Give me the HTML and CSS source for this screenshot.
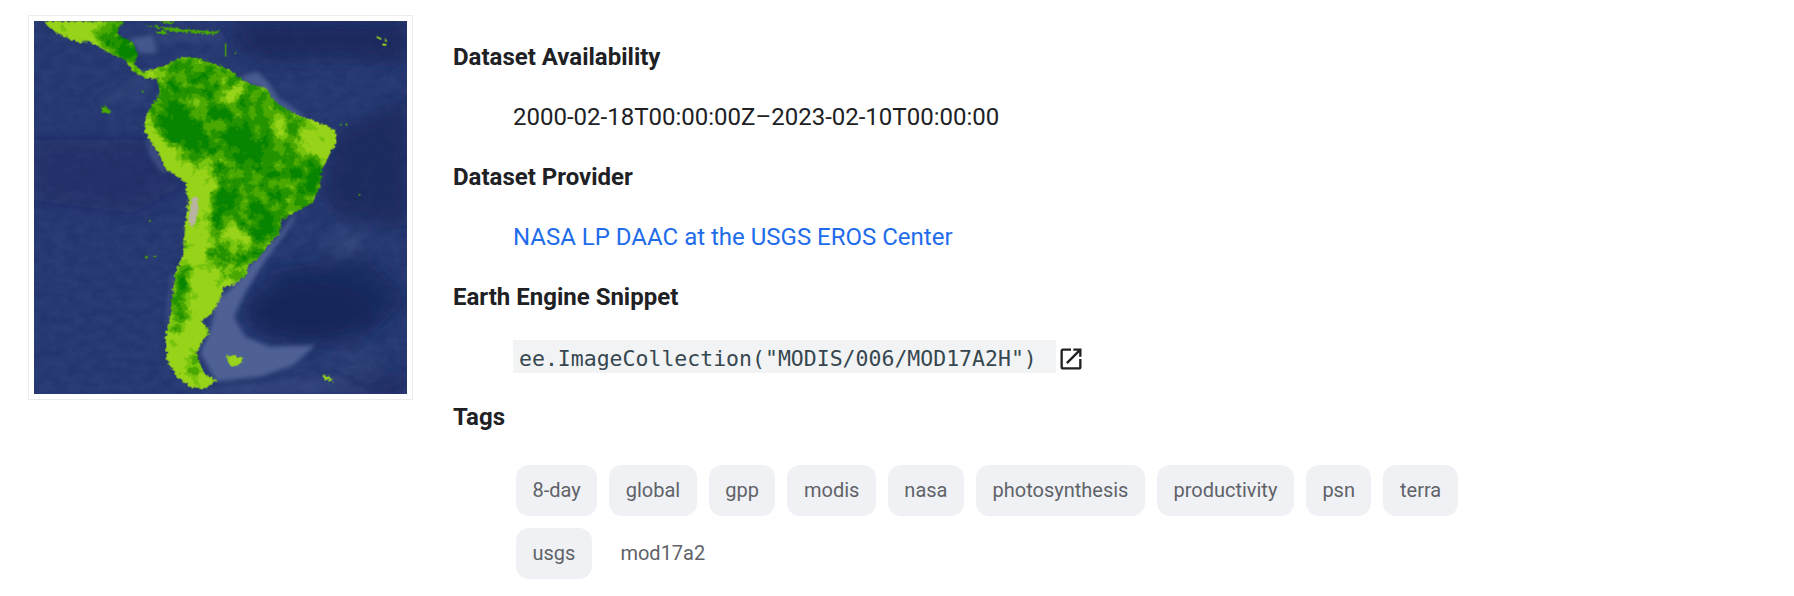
FILE: index.html
```
<!DOCTYPE html>
<html lang="en">
<head>
<meta charset="utf-8">
<title>MOD17A2H</title>
<link rel="stylesheet" href="styles.css">
</head>
<body>
<main class="page">
  <figure class="thumb">
    <svg class="map" viewBox="102 63 1119 1119" role="img" aria-label="Map of gross primary productivity over South America">
      <defs>
        <filter id="rough" x="-5%" y="-5%" width="110%" height="110%" color-interpolation-filters="sRGB">
          <feTurbulence type="fractalNoise" baseFrequency="0.11" numOctaves="2" seed="4"/>
          <feDisplacementMap in="SourceGraphic" scale="16" xChannelSelector="R" yChannelSelector="G"/>
        </filter>
        <filter id="field" x="0" y="0" width="100%" height="100%" color-interpolation-filters="sRGB">
          <feGaussianBlur in="SourceGraphic" stdDeviation="16" result="blurred"/>
          <feTurbulence type="fractalNoise" baseFrequency="0.028" numOctaves="4" seed="23"/>
          <feColorMatrix values="1 0 0 0 0  1 0 0 0 0  1 0 0 0 0  0 0 0 0 1" result="noise"/>
          <feComposite in="blurred" in2="noise" operator="arithmetic" k1="0" k2="1" k3="0.95" k4="-0.47"/>
          <feComponentTransfer>
            <feFuncR type="discrete" tableValues=".59 .47 .29 .14 .03"/>
            <feFuncG type="discrete" tableValues=".83 .77 .66 .58 .52"/>
            <feFuncB type="discrete" tableValues=".10 .06 .01 0 0"/>
          </feComponentTransfer>
        </filter>
        <filter id="grain" x="0" y="0" width="100%" height="100%" color-interpolation-filters="sRGB">
          <feTurbulence type="fractalNoise" baseFrequency="0.025 0.04" numOctaves="5" seed="9"/>
          <feColorMatrix values="0 0 0 0 .09  0 0 0 0 .15  0 0 0 0 .36  1.6 0 0 0 -.55"/>
        </filter>
        <filter id="soft"><feGaussianBlur stdDeviation="26"/></filter>
        <filter id="soft2"><feGaussianBlur stdDeviation="6"/></filter>
        <clipPath id="land"><path d="M130 63L370 63L350 100L400 130L415 165L400 190L430 215L470 205L505 190L545 170L590 175L640 190L690 210L720 235L760 255L800 265L825 305L880 340L920 355L1005 388L1010 425L985 470L965 510L960 560L935 610L880 640L845 660L840 700L800 740L780 770L745 795L740 825L700 855L670 860L665 885L655 905L640 935L605 965L630 995L610 1020L590 1055L600 1090L615 1125L650 1140L610 1170L570 1160L530 1130L500 1080L497 1010L510 950L525 820L550 760L555 680L565 600L555 545L500 510L470 450L432 395L440 340L480 280L470 235L440 235L400 215L375 180L330 160L270 125L235 128L190 110L150 85Z"/></clipPath>
      </defs>
      <rect class="sea" x="102" y="63" width="1119" height="1119"/>
      <g filter="url(#soft)">
        <path class="deep" d="M720 63L1221 63L1221 190L1000 170L780 180L700 120Z" opacity=".8"/>
        <path class="deep" d="M1010 400L1221 300L1221 680L1000 640L970 560Z" opacity=".75"/>
        <ellipse class="deep" cx="930" cy="935" rx="190" ry="90"/>
        <path class="deep" d="M780 810L1100 770L1221 900L1100 1010L900 900Z" opacity=".65"/>
        <path class="deep" d="M102 420L520 420L540 560L400 640L102 600Z" opacity=".3"/>
        <path class="deep" d="M1000 1150L1221 1110L1221 1182L1000 1182Z" opacity=".5"/>
        <path class="pale" d="M975 725L1075 700L1080 750L1000 745Z" opacity=".7"/>
        <path class="pale" d="M1010 1080L1130 1060L1130 1130L1000 1120Z" opacity=".3"/>
      </g>
      <rect class="noise" x="102" y="63" width="1119" height="1119" filter="url(#grain)" opacity=".4"/>
      <g filter="url(#soft2)">
        <path class="shelf" d="M650 900L700 860L745 800L840 700L885 640L880 665L790 790L735 880L702 950L735 1010L810 1040L945 1035L880 1095L780 1130L650 1145L600 1060L630 990Z"/>
        <path class="shelf" d="M720 230L770 215L800 240L840 300L920 350L880 345L820 310L790 270L730 245Z" opacity=".85"/>
        <path class="shelf" d="M385 115L460 105L470 160L420 160Z" opacity=".75"/>
        <path class="shelf" d="M470 100L660 95L680 125L570 125L470 130Z" opacity=".25"/>
        <path class="shelf" d="M435 400L470 450L500 510L490 525L450 470Z" opacity=".55"/>
        <path class="shelf" d="M500 1000L525 820L512 830L495 960Z" opacity=".5"/>
        <path class="shelf" d="M620 1165L1000 1125L1100 1170L1100 1182L610 1182Z" opacity=".25"/>
        <path class="shelf" d="M290 300L420 225L470 240L430 300L310 315Z" opacity=".16"/>
      </g>
      <g filter="url(#rough)">
        <g clip-path="url(#land)">
          <g filter="url(#field)">
            <rect class="f-low" x="102" y="63" width="1119" height="1119"/>
            <path class="f-mid" d="M265 90L380 40L440 150L460 240L380 190L300 140Z"/>
            <path class="f-mid" d="M470 230L550 150L720 215L830 280L930 350L880 440L970 470L985 560L920 640L860 660L850 700L790 780L750 800L735 840L680 830L620 770L630 690L625 640L650 560L640 515L570 480L500 430L440 350Z"/>
            <path class="f-mid" d="M530 830L570 770L565 900L535 1010L505 1000Z"/>
            <path class="f-low" d="M670 250L730 265L730 300L670 300Z"/>
            <path class="f-low" d="M570 320L610 320L610 350L570 350Z"/>
            <path class="f-low" d="M930 370L1020 390L1000 450L950 480L915 430Z"/>
            <path class="f-low" d="M670 680L745 690L770 720L740 745L690 740L650 710Z"/>
            <path class="f-low" d="M810 350L860 360L860 400L810 390Z"/>
            <path class="f-high" d="M475 340L545 290L590 360L630 440L570 460L500 410Z"/>
            <path class="f-high" d="M625 310L680 320L680 370L625 370Z"/>
            <path class="f-high" d="M700 370L790 410L790 490L710 480L680 420Z"/>
            <path class="f-high" d="M895 500L965 510L955 590L905 570Z"/>
            <path class="f-high" d="M730 640L840 650L800 720L770 740L750 690Z"/>
            <path class="f-high" d="M650 565L710 565L700 610L640 640Z"/>
            <path class="f-high" d="M340 110L410 140L400 180L340 150Z"/>
            <path class="f-high" d="M530 810L562 790L555 910L525 940Z"/>
            <path class="f-high" d="M625 610L648 590L640 680L622 695Z"/>
            <path class="f-mid" d="M545 1075L590 1060L600 1120L560 1120Z"/>
          </g>
        </g>
      </g>
      <path class="grey" d="M575 595L590 590L598 620L590 650L580 680L565 670L570 630Z" filter="url(#rough)"/>
      <g filter="url(#rough)">
        <path class="mid" d="M305 320L318 318L336 338L305 340Z"/>
        <path class="lime" d="M678 1065L730 1072L718 1098L690 1098Z"/>
        <path class="lime" d="M965 1122L1000 1135L998 1146L975 1138Z"/>
        <path class="mid" d="M430 75L460 78L640 95L660 92L645 102L540 98L500 90Z"/>
        <path class="mid" d="M468 63L525 63L510 72Z"/>
        <path class="mid" d="M468 92L500 92L498 102L468 100Z"/>
      </g>
      <path class="lime" d="M1130 108L1145 115L1143 120L1130 114ZM1155 112L1162 125L1155 125ZM1147 130L1160 132L1158 138L1147 136Z"/>
      <path class="mid" d="M1020 372h5v5h-5zM1037 370h5v7h-5zM1076 582h5v5h-5zM447 660h5v5h-5zM435 768h8v7h-8zM460 767h9v4h-9zM675 130h4v40h-4zM425 272h6v5h-6zM704 157h5v5h-5z"/>
    </svg>
  </figure>
  <dl class="facts">
    <dt class="term">Dataset Availability</dt>
    <dd class="value">2000-02-18T00:00:00Z–2023-02-10T00:00:00</dd>
    <dt class="term">Dataset Provider</dt>
    <dd class="value"><a class="link" href="#">NASA LP DAAC at the USGS EROS Center</a></dd>
    <dt class="term">Earth Engine Snippet</dt>
    <dd class="value snippet">
      <code class="code">ee.ImageCollection("MODIS/006/MOD17A2H") </code>
      <a class="open" href="#" aria-label="Open in code editor">
        <svg class="open-icon" viewBox="0 0 24 24"><path d="M19 19H5V5h7V3H5c-1.11 0-2 .9-2 2v14c0 1.1.89 2 2 2h14c1.1 0 2-.9 2-2v-7h-2v7zM14 3v2h3.59l-9.83 9.83 1.41 1.41L19 6.41V10h2V3h-7z"/></svg>
      </a>
    </dd>
    <dt class="term">Tags</dt>
    <dd class="value tags">
      <span class="chip">8-day</span>
      <span class="chip">global</span>
      <span class="chip">gpp</span>
      <span class="chip">modis</span>
      <span class="chip">nasa</span>
      <span class="chip">photosynthesis</span>
      <span class="chip">productivity</span>
      <span class="chip">psn</span>
      <span class="chip">terra</span>
      <span class="chip">usgs</span>
      <span class="chip plain">mod17a2</span>
    </dd>
  </dl>
</main>
</body>
</html>
```

FILE: styles.css
```
html, body {
  margin: 0;
  padding: 0;
  background: #fff;
}

.page {
  display: flex;
  align-items: flex-start;
  gap: 40px;
  padding: 15px 0 0 28px;
  font-family: Roboto, "Liberation Sans", sans-serif;
  color: #202124;
}

.thumb {
  margin: 0;
  flex: none;
  width: 373px;
  height: 373px;
  padding: 5px;
  border: 1px solid #ececec;
}

.map {
  display: block;
  width: 373px;
  height: 373px;
}

.sea { fill: #2a3c75; }
.noise { fill: #000; }
.deep { fill: #17265a; }
.pale { fill: #4a5c90; }
.shelf { fill: #4f6195; }
.lime { fill: #97d41b; }
.mid { fill: #4aa802; }
.grey { fill: #b9b3a3; }
.f-low { fill: #000; }
.f-mid { fill: #a3a3a3; }
.f-high { fill: #f0f0f0; }

.facts {
  margin: 0;
  padding-top: 27px;
  flex: 1;
}

.term {
  font-size: 24px;
  font-weight: 700;
  line-height: 30px;
  height: 30px;
}

.value {
  margin: 30px 0 30px 60px;
  height: 30px;
  font-size: 24px;
  line-height: 30px;
}

.link {
  color: #1f6ceb;
  text-decoration: none;
}

.snippet {
  display: flex;
  align-items: center;
  gap: 1px;
}

.code {
  font-family: "DejaVu Sans Mono", "Liberation Mono", monospace;
  font-size: 21.5px;
  line-height: 33px;
  padding: 2px 6px 0;
  margin-top: -1px;
  height: 31px;
  background: #f1f3f4;
  color: #37474f;
  white-space: pre;
}

.open {
  display: flex;
  color: #202124;
  margin-top: 3px;
}

.open-icon {
  width: 28px;
  height: 28px;
  fill: currentColor;
}

.tags {
  display: flex;
  flex-wrap: wrap;
  gap: 12px;
  height: auto;
  margin: 33px 0 0 63px;
  width: 960px;
}

.chip {
  height: 51px;
  padding: 0 16.5px;
  border-radius: 13px;
  background: #f0f1f5;
  color: #5f6368;
  font-size: 20px;
  line-height: 51px;
}

.plain {
  background: none;
}
```
